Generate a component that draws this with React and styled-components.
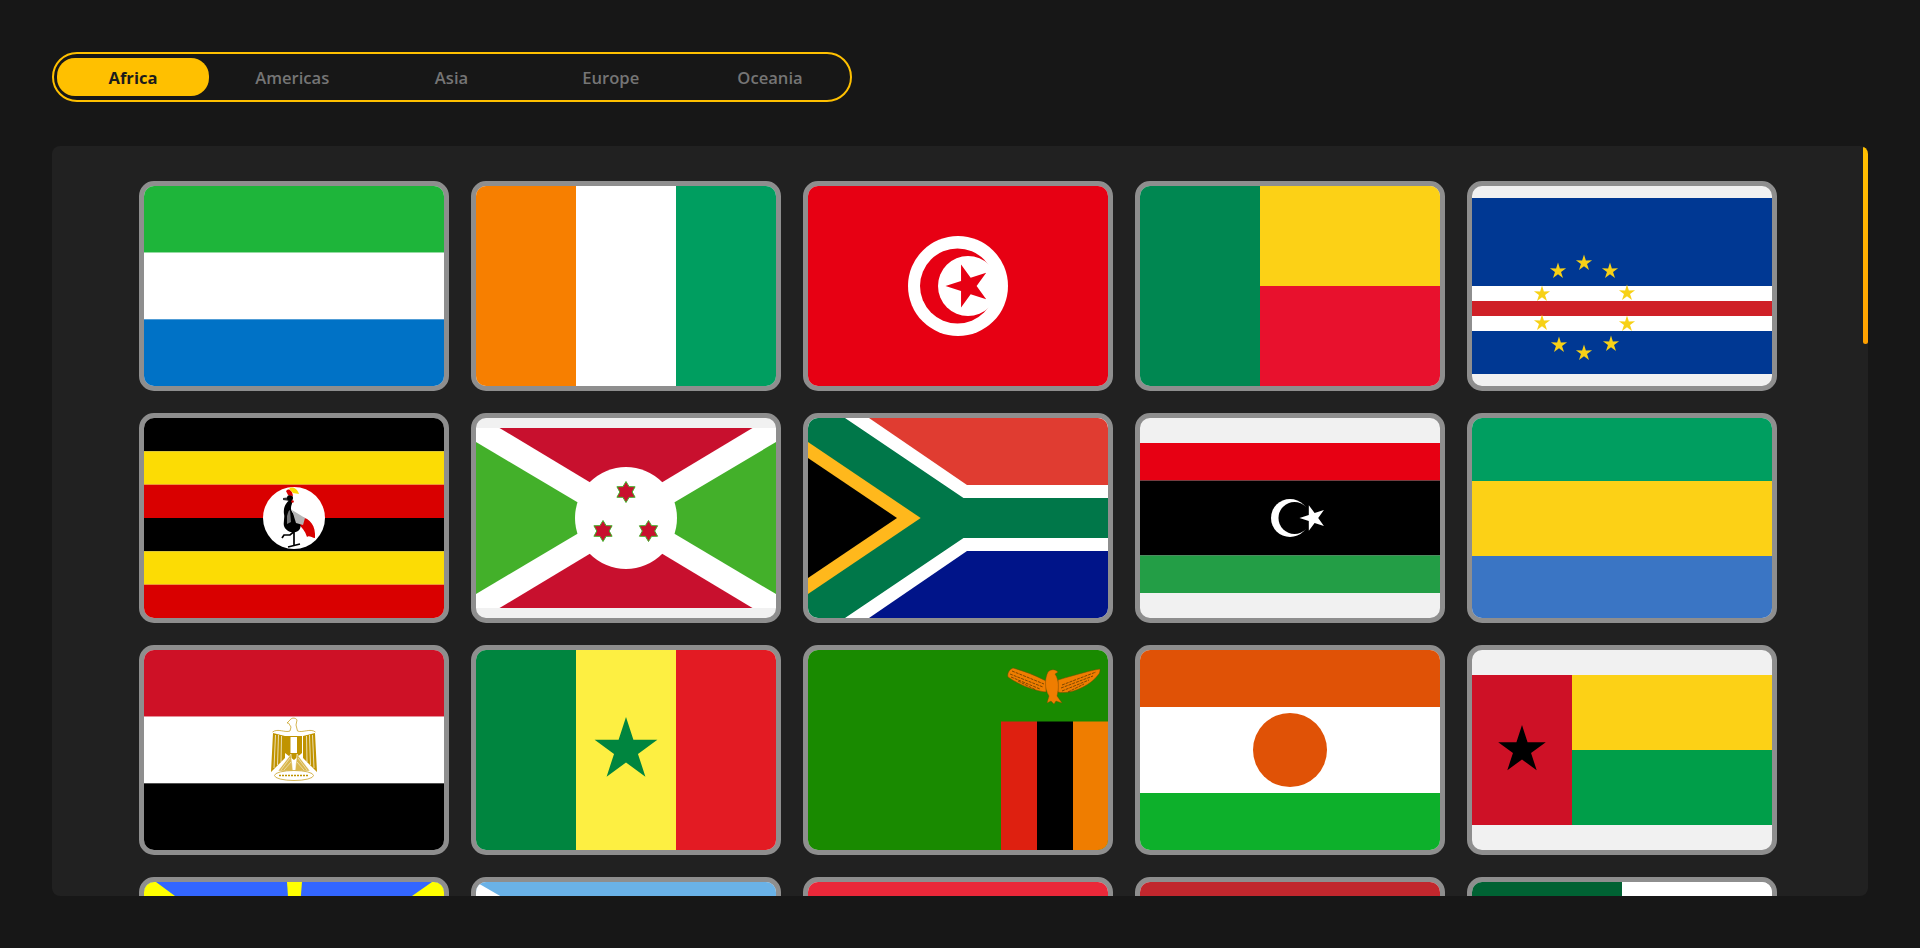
import React, { useState } from 'react';
import styled, { createGlobalStyle } from 'styled-components';

const GlobalStyle = createGlobalStyle`
  html, body { margin: 0; padding: 0; background: #171717; overflow: hidden; }
  * { box-sizing: border-box; }
`;

const Page = styled.main`
  display: flex;
  flex-direction: column;
  align-items: flex-start;
  gap: 44px;
  height: 948px;
  padding: 52px;
  background: #171717;
  font-family: "Open Sans", "Noto Sans", sans-serif;
`;

const TabBar = styled.nav`
  display: flex;
  gap: 7.25px;
  width: 800px;
  height: 50px;
  padding: 4px 3px;
  border: 2px solid #ffc000;
  border-radius: 25px;
`;

const Tab = styled.button`
  flex: 0 0 152px;
  height: 38px;
  padding: 0;
  border: 0;
  border-radius: 18px;
  font: ${(p) => (p.$active ? 700 : 600)} 16.6px "Open Sans", "Noto Sans", sans-serif;
  color: ${(p) => (p.$active ? '#1c1c1c' : '#757575')};
  background: ${(p) => (p.$active ? '#ffc000' : 'transparent')};
`;

const PanelFrame = styled.section`
  position: relative;
  width: 1816px;
  height: 750px;
  overflow: hidden;
  border-radius: 8px;
  background: #212121;
`;

const Scroller = styled.div`
  height: 100%;
  overflow-y: scroll;
  scrollbar-width: none;
`;

const ScrollThumb = styled.div`
  position: absolute;
  top: 0;
  right: 0;
  width: 5px;
  height: 198px;
  border-radius: 3px;
  background: linear-gradient(#ffc000, #ffa000);
`;

const FlagGrid = styled.div`
  display: grid;
  grid-template-columns: repeat(5, 310px);
  justify-content: center;
  gap: 22px;
  padding: 35px 5px 44px 0;
`;

const FlagCard = styled.div`
  width: 310px;
  height: 210px;
  overflow: hidden;
  border: 5px solid #8e8e8e;
  border-radius: 15px;
  background: #f1f1f1;
`;

const FlagArt = styled.svg`
  display: block;
  width: 300px;
  height: 200px;
`;

const starPoints = (cx, cy, R, r = R * 0.382, rot = -90, n = 5) =>
  Array.from({ length: n * 2 }, (_, i) => {
    const a = ((rot + (i * 180) / n) * Math.PI) / 180;
    const d = i % 2 ? r : R;
    return `${(cx + d * Math.cos(a)).toFixed(2)},${(cy + d * Math.sin(a)).toFixed(2)}`;
  }).join(' ');

const H = ({ colors, y = 0, h = 200 }) =>
  colors.map((c, i) => (
    <rect key={i} x="0" y={y + (i * h) / colors.length} width="300" height={h / colors.length + 0.01} fill={c} />
  ));

const V = ({ colors }) =>
  colors.map((c, i) => (
    <rect key={i} x={(i * 300) / colors.length} y="0" width={300 / colors.length + 0.01} height="200" fill={c} />
  ));

const Tunisia = () => (
  <>
    <rect width="300" height="200" fill="#E70013" />
    <circle cx="150" cy="100" r="50" fill="#fff" />
    <circle cx="149.5" cy="100" r="37.5" fill="#E70013" />
    <circle cx="160" cy="100" r="30" fill="#fff" />
    <polygon points={starPoints(160, 100, 22.5, 8.6, 180)} fill="#E70013" />
  </>
);

const Benin = () => (
  <>
    <rect width="120" height="200" fill="#008751" />
    <rect x="120" width="180" height="100" fill="#FCD116" />
    <rect x="120" y="100" width="180" height="100" fill="#E8112D" />
  </>
);

const capeStars = [[86, 85], [112, 77], [138, 85], [70, 108], [155, 107], [70, 137], [155, 138], [87, 159], [112, 167], [139, 158]];

const CapeVerde = () => (
  <>
    <rect y="12" width="300" height="176" fill="#003893" />
    <rect y="100" width="300" height="45" fill="#fff" />
    <rect y="115" width="300" height="15" fill="#CF2027" />
    {capeStars.map(([x, y]) => (
      <polygon key={`${x}-${y}`} points={starPoints(x, y, 8.5, 3.2)} fill="#F7D116" />
    ))}
  </>
);

const Uganda = () => (
  <>
    <H colors={['#000', '#FCDC04', '#D90000', '#000', '#FCDC04', '#D90000']} />
    <circle cx="150" cy="100" r="31" fill="#fff" />
    <path d="M157 99C166 100 172 108 171 120C168 120 165 117 163 119C161 113 158 109 154 106Z" fill="#D90000" />
    <path d="M146 82C142 84 139 90 140 96C141 100 139 104 140 108C142 114 150 116 154 113C158 110 157 104 153 100C150 96 147 94 147 90C147 87 149 85 148 82Z" fill="#000" />
    <path d="M148 92L161 100L159 107L152 105Z" fill="#b5b5b5" />
    <path d="M143 98C144 94 145 92 146 92L147 104L143 106Z" fill="#777" />
    <path d="M147 79L139 80L139 82L146 83Z" fill="#333" />
    <circle cx="146" cy="80" r="3" fill="#000" />
    <path d="M142 73C144 70 148 71 149 78L144 77Z" fill="#D90000" />
    <path d="M145 71C148 68 153 70 155 76L149 75Z" fill="#FCDC04" />
    <circle cx="148.5" cy="83.5" r="1.3" fill="#D90000" />
    <path d="M150 113L150 127M144 129L156 126M152 112L146 117L140 117L138 120" stroke="#000" strokeWidth="1.7" fill="none" />
  </>
);

const Burundi = () => (
  <>
    <rect y="10" width="300" height="180" fill="#fff" />
    <polygon points="23.5,10 276.5,10 150,86" fill="#C8102E" />
    <polygon points="23.5,190 276.5,190 150,114" fill="#C8102E" />
    <polygon points="0,24 128,100 0,176" fill="#43B02A" />
    <polygon points="300,24 172,100 300,176" fill="#43B02A" />
    <circle cx="150" cy="100" r="51" fill="#fff" />
    {[[150, 74], [127, 113], [172.5, 113]].map(([x, y]) => (
      <polygon key={x} points={starPoints(x, y, 10.5, 6.2, -90, 6)} fill="#C8102E" stroke="#43B02A" strokeWidth="1" />
    ))}
  </>
);

const SouthAfrica = () => (
  <>
    <rect width="300" height="200" fill="#fff" />
    <polygon points="61,0 300,0 300,67 159,67" fill="#E03C31" />
    <polygon points="61,200 300,200 300,133 159,133" fill="#001489" />
    <polygon points="0,0 37,0 155.5,80 300,80 300,120 155.5,120 37,200 0,200" fill="#007749" />
    <polygon points="0,24 112.7,100 0,176" fill="#FFB81C" />
    <polygon points="0,40 89,100 0,160" fill="#000" />
  </>
);

const Libya = () => (
  <>
    <rect y="25" width="300" height="37.5" fill="#E70013" />
    <rect y="62.5" width="300" height="75" fill="#000" />
    <rect y="137.5" width="300" height="37.5" fill="#239E46" />
    <circle cx="150" cy="100" r="19" fill="#fff" />
    <circle cx="154.5" cy="100" r="16" fill="#000" />
    <polygon points={starPoints(173, 100, 13.5, 5.2, 180)} fill="#fff" />
  </>
);

const Gabon = () => (
  <>
    <rect width="300" height="63" fill="#009E60" />
    <rect y="63" width="300" height="75" fill="#FCD116" />
    <rect y="138" width="300" height="62" fill="#3A75C4" />
  </>
);

const Egypt = () => (
  <>
    <H colors={['#CE1126', '#fff', '#000']} />
    <path d="M129 83L127 122L141 108L141 86ZM171 83L173 122L159 108L159 86Z" fill="#C09300" />
    <path d="M131.5 85L130 118M134.5 85L133.5 115M137.5 86L137 112M168.5 85L170 118M165.5 85L166.5 115M162.5 86L163 112" stroke="#fff" strokeWidth="0.7" />
    <path d="M128.5 82C134 78 141 83 146 81L147 77L144.5 73L143 73L146 70C148 67 152 68 153 70L152 75L153.5 81C159 83 166 78 171.5 82" stroke="#C9A227" strokeWidth="0.8" fill="#fff" />
    <path d="M141 86L158 86L158 103L150 110L141 103Z" fill="#C09300" />
    <rect x="146.5" y="87" width="6.5" height="16" fill="#fff" />
    <path d="M134 121L147 104L149 121ZM166 121L153 104L151 121Z" fill="#D9B64A" stroke="#fff" strokeWidth="0.5" />
    <path d="M137 120L146 108M140 120L147 112M163 120L154 108M160 120L153 112" stroke="#fff" strokeWidth="0.5" />
    <ellipse cx="150" cy="125.5" rx="19.5" ry="5" fill="#fff" stroke="#C9A227" strokeWidth="0.8" />
    <path d="M135 125.5H165" stroke="#C09300" strokeWidth="1.4" strokeDasharray="2 1" />
  </>
);

const Senegal = () => (
  <>
    <V colors={['#00853F', '#FDEF42', '#E31B23']} />
    <polygon points={starPoints(150, 100, 33, 12.6)} fill="#00853F" />
  </>
);

const Zambia = () => (
  <>
    <rect width="300" height="200" fill="#198A00" />
    <rect x="193" y="71.5" width="36" height="128.5" fill="#DE2010" />
    <rect x="229" y="71.5" width="36" height="128.5" fill="#000" />
    <rect x="265" y="71.5" width="35" height="128.5" fill="#EF7D00" />
    <path d="M205 18C212 20 225 24 238 31L238 42C228 41 213 36 200 27C199 23 201 20 205 18Z" fill="#EF7D00" stroke="#7a4a00" strokeWidth="0.5" />
    <path d="M292 19C285 20 270 24 250 30L250 42C262 45 282 36 290 25C292 23 292 21 292 19Z" fill="#EF7D00" stroke="#7a4a00" strokeWidth="0.5" />
    <path d="M240 22C243 19 247 19 250 22L247 24C251 30 251 38 249 46L254 53L248 51L246 54L243 51L239 53L241 46C236 38 237 28 240 22Z" fill="#EF7D00" stroke="#7a4a00" strokeWidth="0.4" />
    <path d="M204 21L236 34M202 24L235 37M203 27L232 39M210 31L228 40M254 35L288 22M253 38L285 26M254 41L281 30M260 42L276 34" stroke="#5f3a00" strokeWidth="0.8" strokeDasharray="3 1" fill="none" />
  </>
);

const Niger = () => (
  <>
    <rect width="300" height="57" fill="#E05206" />
    <rect y="57" width="300" height="86" fill="#fff" />
    <rect y="143" width="300" height="57" fill="#0DB02B" />
    <circle cx="150" cy="100" r="37" fill="#E05206" />
  </>
);

const GuineaBissau = () => (
  <>
    <rect y="25" width="100" height="150" fill="#CE1126" />
    <rect x="100" y="25" width="200" height="75" fill="#FCD116" />
    <rect x="100" y="100" width="200" height="75" fill="#009E49" />
    <polygon points={starPoints(50, 100, 25, 9.5)} fill="#000" />
  </>
);

const Rays = () => (
  <>
    <rect width="300" height="200" fill="#3366FF" />
    <polygon points="0,0 12,0 31,14 150,100 0,14" fill="#FFFF00" />
    <polygon points="300,0 288,0 268,14 150,100 300,14" fill="#FFFF00" />
    <polygon points="143,0 158,0 150,100" fill="#FFFF00" />
  </>
);

const Djibouti = () => (
  <>
    <rect width="300" height="100" fill="#6AB2E7" />
    <rect y="100" width="300" height="100" fill="#12AD2B" />
    <polygon points="0,0 173,100 0,200" fill="#fff" />
    <polygon points={starPoints(58, 100, 24)} fill="#D7141A" />
  </>
);

const Mauritius = () => <H colors={['#EA2839', '#1A206D', '#FFD500', '#00A551']} />;

const Mauritania = () => (
  <>
    <rect width="300" height="200" fill="#C1272D" />
    <rect y="40" width="300" height="120" fill="#00A95C" />
    <polygon points={starPoints(150, 72, 17)} fill="#FFD700" />
  </>
);

const Algeria = () => (
  <>
    <rect width="150" height="200" fill="#006233" />
    <rect x="150" width="150" height="200" fill="#fff" />
    <circle cx="150" cy="100" r="50" fill="#D21034" />
    <circle cx="162" cy="100" r="40" fill="#006233" />
    <polygon points={starPoints(165, 100, 25)} fill="#D21034" />
  </>
);

const Bands = ({ v, colors }) => (v ? <V colors={colors} /> : <H colors={colors} />);

const flags = [
  <H key="sl" colors={['#1EB53A', '#fff', '#0072C6']} />,
  <V key="ci" colors={['#F77F00', '#fff', '#009E60']} />,
  <Tunisia key="tn" />,
  <Benin key="bj" />,
  <CapeVerde key="cv" />,
  <Uganda key="ug" />,
  <Burundi key="bi" />,
  <SouthAfrica key="za" />,
  <Libya key="ly" />,
  <Gabon key="ga" />,
  <Egypt key="eg" />,
  <Senegal key="sn" />,
  <Zambia key="zm" />,
  <Niger key="ne" />,
  <GuineaBissau key="gw" />,
  <Rays key="rays" />,
  <Djibouti key="dj" />,
  <Mauritius key="mu" />,
  <Mauritania key="mr" />,
  <Algeria key="dz" />,
];

const moreFlags = [
  [true, ['#14B53A', '#FCD116', '#CE1126']], [true, ['#002664', '#FECB00', '#C60C30']],
  [true, ['#CE1126', '#FCD116', '#009460']], [true, ['#008751', '#fff', '#008751']],
  [false, ['#CE1126', '#0C1C8C', '#3A7728']], [false, ['#CE1126', '#fff', '#000']],
  [false, ['#D21034', '#fff', '#007E3A']], [false, ['#078930', '#FCDD09', '#DA121A']],
  [false, ['#006600', '#000', '#BB0000']], [false, ['#1EB53A', '#FCD116', '#00A3DD']],
  [true, ['#3A75C4', '#FCD116', '#CE1126']], [false, ['#EF2B2D', '#FCD116', '#009739']],
  [true, ['#009E49', '#FCD116', '#CE1126']], [false, ['#D21034', '#000', '#FFD100']],
  [false, ['#007A3D', '#CE1126', '#000']], [true, ['#DE2110', '#FFD600', '#007A33']],
  [false, ['#FFD200', '#5EB6E4', '#000']], [false, ['#CE1126', '#00247D', '#FFD100']],
  [false, ['#FC3D32', '#fff', '#007E3A']], [false, ['#D21034', '#FFD100', '#00A551']],
  [false, ['#1EB53A', '#000', '#FCD116']], [false, ['#00732F', '#fff', '#000']],
  [false, ['#FFC61E', '#009E60', '#ED1C24']], [false, ['#12AD2B', '#FCD116', '#D21034']],
  [true, ['#FFD100', '#009639', '#CE1126']], [true, ['#00A551', '#fff', '#D21034']],
  [false, ['#00A3DD', '#FCD116', '#1EB53A']], [false, ['#EF2B2D', '#fff', '#00A3DD']],
  [false, ['#007A3D', '#000', '#CE1126']], [true, ['#FF8200', '#fff', '#12AD2B']],
  [false, ['#D52B1E', '#fff', '#0039A6']], [false, ['#5EB6E4', '#FCD116', '#14B53A']],
  [false, ['#000', '#FCD116', '#DE2110']], [false, ['#0F47AF', '#FCD116', '#CE1126']],
  [false, ['#078930', '#fff', '#DA121A']], [true, ['#CE1126', '#fff', '#007A3D']],
  [false, ['#00A651', '#fff', '#EF3340']], [false, ['#3A75C4', '#fff', '#12AD2B']],
  [true, ['#1EB53A', '#FCD116', '#EF2B2D']], [false, ['#FFD100', '#EF2B2D', '#3A75C4']],
];

const regions = ['Africa', 'Americas', 'Asia', 'Europe', 'Oceania'];

export default function App() {
  const [thumbTop, setThumbTop] = useState(0);
  const onScroll = (e) => {
    const { scrollTop, scrollHeight, clientHeight } = e.currentTarget;
    setThumbTop((scrollTop / (scrollHeight - clientHeight)) * (clientHeight - 198));
  };
  return (
    <Page>
      <GlobalStyle />
      <TabBar>
        {regions.map((name, i) => (
          <Tab key={name} $active={i === 0}>{name}</Tab>
        ))}
      </TabBar>
      <PanelFrame>
        <Scroller onScroll={onScroll}>
          <FlagGrid>
            {flags.map((flag) => (
              <FlagCard key={flag.key}>
                <FlagArt viewBox="0 0 300 200">{flag}</FlagArt>
              </FlagCard>
            ))}
            {moreFlags.map(([v, colors]) => (
              <FlagCard key={colors.join()}>
                <FlagArt viewBox="0 0 300 200"><Bands v={v} colors={colors} /></FlagArt>
              </FlagCard>
            ))}
          </FlagGrid>
        </Scroller>
        <ScrollThumb style={{ transform: `translateY(${thumbTop}px)` }} />
      </PanelFrame>
    </Page>
  );
}
